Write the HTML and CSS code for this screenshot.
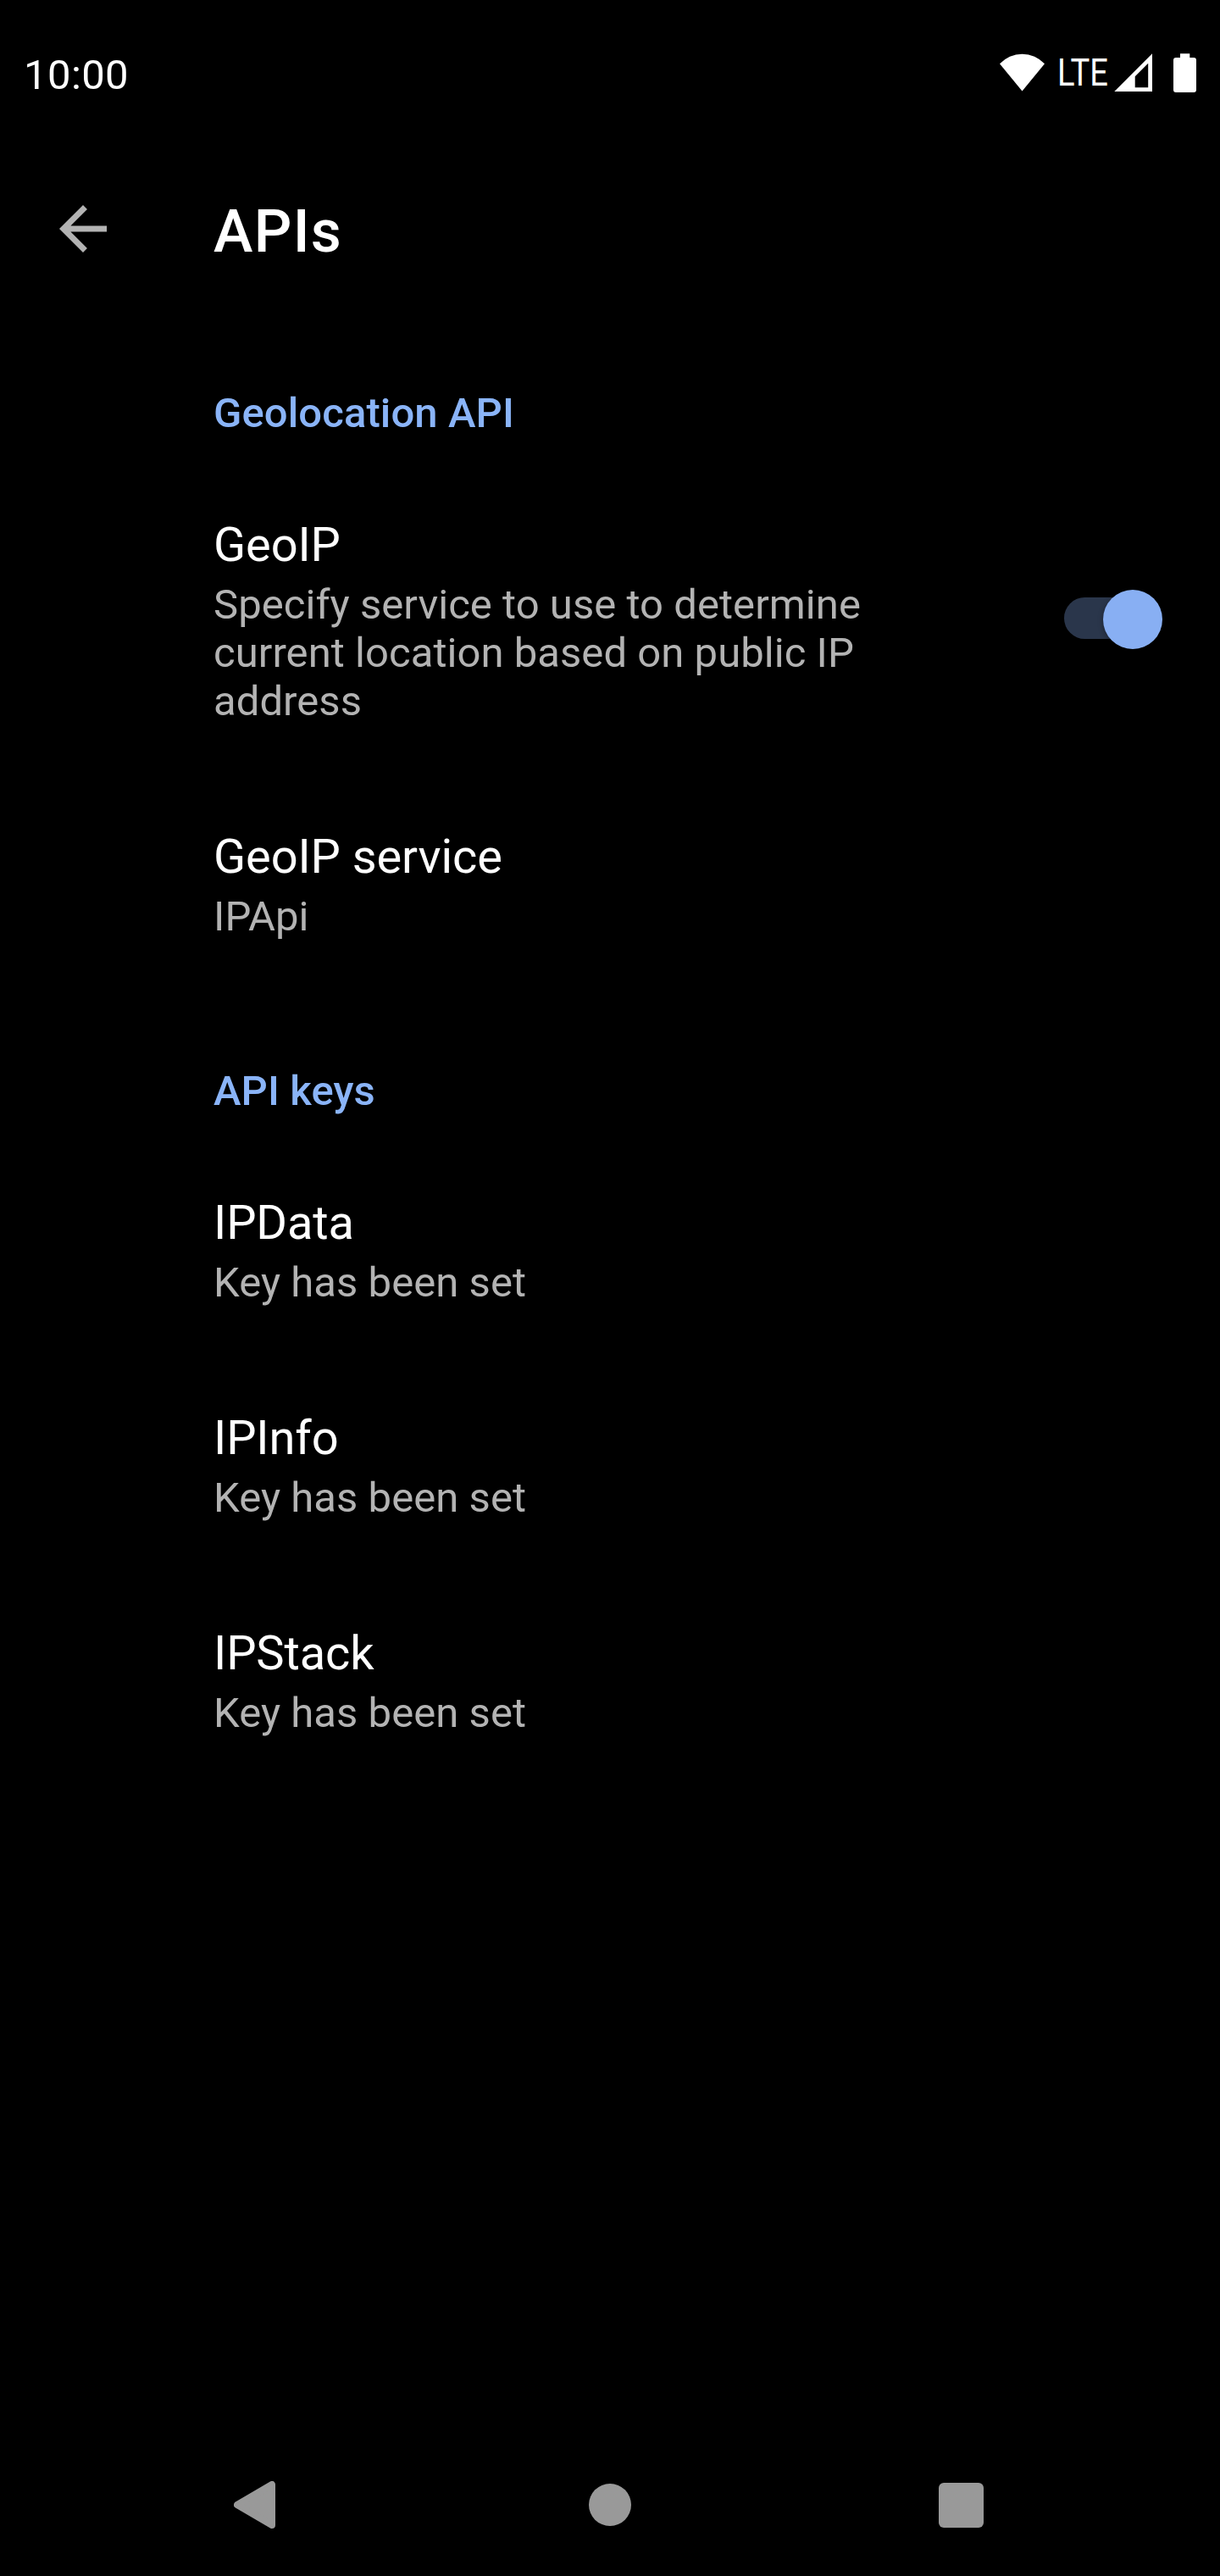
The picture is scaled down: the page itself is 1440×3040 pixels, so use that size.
FILE: index.html
```html
<!DOCTYPE html>
<html lang="en">
<head>
<meta charset="utf-8">
<title>APIs</title>
<link rel="stylesheet" href="styles.css">
</head>
<body>
<div class="screen">
  <header class="status-bar">
    <span class="clock">10:00</span>
    <div class="status-icons">
      <svg class="wifi" width="53" height="57" viewBox="0 0 53 57"><path d="M0 16.3A36 36 0 0 1 53 16.3L26.5 48.5z"/></svg>
      <span class="network">LTE</span>
      <svg class="signal" width="45" height="57" viewBox="0 0 45 57"><path fill-rule="evenodd" d="M.3 49L45 4.3V49zM24.7 31.3V44.2H40.2V15.8z"/></svg>
      <svg class="battery" width="27" height="57" viewBox="0 0 27 57"><path d="M8 4.3H19.3V9H24a3 3 0 0 1 3 3V47a3 3 0 0 1-3 3H3a3 3 0 0 1-3-3V12a3 3 0 0 1 3-3H8z"/></svg>
    </div>
  </header>

  <div class="toolbar">
    <svg class="back" width="84" height="84" viewBox="0 0 24 24"><path d="M20 11H7.83l5.59-5.59L12 4l-8 8 8 8 1.41-1.41L7.83 13H20v-2z"/></svg>
    <h1 class="title">APIs</h1>
  </div>

  <main class="settings">
    <h2 class="section">Geolocation API</h2>
    <div class="row">
      <div class="text">
        <div class="name">GeoIP</div>
        <div class="summary">Specify service to use to determine current location based on public IP address</div>
      </div>
      <div class="switch"><span class="thumb"></span></div>
    </div>
    <div class="row">
      <div class="text">
        <div class="name">GeoIP service</div>
        <div class="summary">IPApi</div>
      </div>
    </div>

    <h2 class="section">API keys</h2>
    <div class="row">
      <div class="text">
        <div class="name">IPData</div>
        <div class="summary">Key has been set</div>
      </div>
    </div>
    <div class="row">
      <div class="text">
        <div class="name">IPInfo</div>
        <div class="summary">Key has been set</div>
      </div>
    </div>
    <div class="row">
      <div class="text">
        <div class="name">IPStack</div>
        <div class="summary">Key has been set</div>
      </div>
    </div>
  </main>

  <nav class="nav-bar">
    <svg class="nav-back" width="49" height="56" viewBox="0 0 49 56"><path d="M4 28L45 4V52z" stroke="#999" stroke-width="8" stroke-linejoin="round"/></svg>
    <span class="nav-home"></span>
    <span class="nav-recents"></span>
  </nav>
</div>
</body>
</html>
```
FILE: styles.css
```css
* {
  box-sizing: border-box;
}

body {
  margin: 0;
  background: #000;
  color: #fff;
  font-family: Roboto, "Liberation Sans", sans-serif;
}

svg {
  display: block;
  flex: none;
}

.screen {
  display: flex;
  flex-direction: column;
  width: 1440px;
  height: 3040px;
  overflow: hidden;
}

.status-bar {
  display: flex;
  justify-content: space-between;
  height: 175px;
  padding: 59px 28px 0;
}

.clock {
  margin-top: 1px;
  font-size: 49px;
  line-height: 57px;
  letter-spacing: 0.4px;
}

.status-icons {
  display: flex;
  align-items: flex-start;
  fill: #fff;
}

.network {
  width: 67px;
  margin-left: 15px;
  font-size: 44px;
  line-height: 54px;
  transform: scaleX(0.866);
  transform-origin: left;
}

.battery {
  margin-left: 25px;
}

.toolbar {
  display: flex;
  align-items: flex-start;
  gap: 112px;
  height: 195px;
  padding-left: 56px;
}

.back {
  margin-top: 53px;
  fill: #b3b3b3;
}

.title {
  margin: 57px 0 0;
  font-size: 70px;
  font-weight: 500;
  line-height: 82px;
  letter-spacing: 1.3px;
}

.section {
  height: 178px;
  margin: 0;
  padding: 89px 0 0 252px;
  color: #8ab4f8;
  font-size: 49px;
  font-weight: 500;
  line-height: 57px;
  letter-spacing: 0.1px;
}

.row {
  display: flex;
  align-items: center;
  justify-content: space-between;
  padding: 62px 68px 60px 252px;
}

.text {
  width: 800px;
}

.name {
  font-size: 56px;
  line-height: 66px;
  letter-spacing: -0.1px;
}

.summary {
  margin-top: 9px;
  color: #b3b3b3;
  font-size: 49px;
  line-height: 57px;
  letter-spacing: 0.05px;
}

.switch {
  display: flex;
  align-items: center;
  justify-content: flex-end;
  width: 116px;
  height: 49px;
  margin-top: -7px;
  border-radius: 25px;
  background: linear-gradient(90deg, #2a364b 90px, transparent 90px);
}

.thumb {
  flex: none;
  width: 70px;
  height: 70px;
  margin-top: 3px;
  border-radius: 50%;
  background: #88aff3;
  box-shadow: 0 2px 6px rgba(0, 0, 0, 0.35);
}

.nav-bar {
  display: flex;
  align-items: center;
  height: 168px;
  margin-top: auto;
  padding-left: 276px;
}

.nav-back {
  fill: #999;
}

.nav-home {
  width: 50px;
  height: 50px;
  margin-left: 370px;
  border-radius: 50%;
  background: #999;
}

.nav-recents {
  width: 53px;
  height: 53px;
  margin-left: 363px;
  border-radius: 6px;
  background: #999;
}
```
